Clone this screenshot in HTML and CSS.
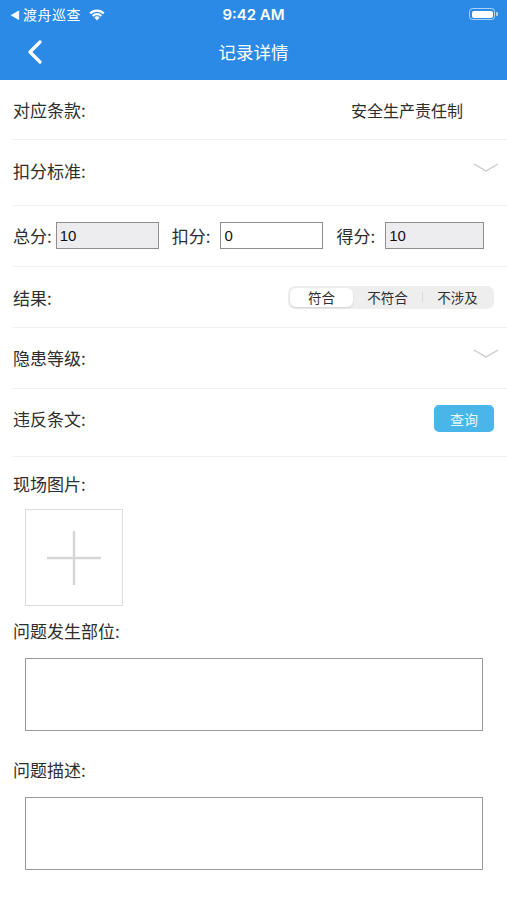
FILE: index.html
```html
<!DOCTYPE html>
<html lang="zh">
<head>
<meta charset="utf-8">
<title>记录详情</title>
<link rel="stylesheet" href="styles.css">
</head>
<body>
<div class="header">
  <div class="statusbar">
    <div class="sb-left">
      <span class="sb-back">◀</span><span class="sb-app">渡舟巡查</span>
      <svg class="wifi" width="18" height="13" viewBox="0 0 18 13"><path d="M9 12.5 L6.3 9.6 A3.9 3.9 0 0 1 11.7 9.6 Z" fill="#fff"/><path d="M3.9 7.2 A7.3 7.3 0 0 1 14.1 7.2 L12.6 8.8 A5.2 5.2 0 0 0 5.4 8.8 Z" fill="#fff"/><path d="M1.4 4.6 A10.8 10.8 0 0 1 16.6 4.6 L15.1 6.2 A8.6 8.6 0 0 0 2.9 6.2 Z" fill="#fff"/></svg>
    </div>
    <div class="sb-time">9:42 AM</div>
    <div class="sb-right">
      <span class="battery"><span class="battery-fill"></span></span><span class="battery-cap"></span>
    </div>
  </div>
  <div class="navbar">
    <svg class="back" width="16" height="24" viewBox="0 0 16 24"><path d="M13 2 L3 12 L13 22" fill="none" stroke="#fff" stroke-width="3.2" stroke-linecap="round" stroke-linejoin="round"/></svg>
    <div class="title">记录详情</div>
  </div>
</div>

<div class="row r1">
  <span class="label">对应条款:</span>
  <span class="value">安全生产责任制</span>
</div>
<div class="row r2">
  <span class="label">扣分标准:</span>
  <svg class="chev" width="26" height="10" viewBox="0 0 26 10"><path d="M1 1 L13 8 L25 1" fill="none" stroke="#c9c9c9" stroke-width="1.3"/></svg>
</div>
<div class="row r3">
  <span class="slabel first">总分:</span><span class="input ro">10</span>
  <span class="slabel gap">扣分:</span><span class="input">0</span>
  <span class="slabel gap">得分:</span><span class="input ro last">10</span>
</div>
<div class="row r4">
  <span class="label">结果:</span>
  <div class="seg">
    <span class="seg-item active">符合</span>
    <span class="seg-item">不符合</span>
    <span class="seg-div"></span>
    <span class="seg-item">不涉及</span>
  </div>
</div>
<div class="row r5">
  <span class="label">隐患等级:</span>
  <svg class="chev" width="26" height="10" viewBox="0 0 26 10"><path d="M1 1 L13 8 L25 1" fill="none" stroke="#c9c9c9" stroke-width="1.3"/></svg>
</div>
<div class="row r6">
  <span class="label">违反条文:</span>
  <span class="btn">查询</span>
</div>

<div class="section">
  <div class="label sec-label first">现场图片:</div>
  <div class="photo">
    <svg width="54" height="54" viewBox="0 0 54 54"><path d="M27 0 V54 M0 27 H54" stroke="#d6d6d6" stroke-width="2.4"/></svg>
  </div>
  <div class="label sec-label">问题发生部位:</div>
  <div class="textbox"></div>
  <div class="label sec-label second">问题描述:</div>
  <div class="textbox"></div>
</div>
</body>
</html>
```
FILE: styles.css
```css
* { box-sizing: border-box; }
html, body { margin: 0; padding: 0; }
body {
  width: 507px;
  height: 900px;
  background: #fff;
  font-family: "Noto Sans CJK SC", "Noto Sans", sans-serif;
  color: #2e2e2e;
  overflow: hidden;
}
.header {
  background: #2a8ae6;
  height: 80px;
  color: #fff;
}
.statusbar {
  height: 28px;
  display: flex;
  align-items: center;
  justify-content: space-between;
  padding: 0 9px 0 10px;
  position: relative;
}
.sb-left { display: flex; align-items: center; font-size: 14px; }
.sb-back { font-size: 10px; margin-right: 3px; }
.sb-app { letter-spacing: 0.5px; }
.wifi { margin-left: 7px; }
.sb-time {
  font-family: "Inter", "Liberation Sans", sans-serif;
  font-weight: 600;
  font-size: 15px;
  position: absolute;
  left: 0; right: 0;
  text-align: center;
  pointer-events: none;
}
.sb-right { display: flex; align-items: center; }
.battery {
  width: 26px; height: 12px;
  border: 1px solid rgba(255,255,255,0.6);
  border-radius: 3.5px;
  padding: 1.5px;
  display: flex;
}
.battery-fill { flex: 1; background: #fff; border-radius: 2px; }
.battery-cap { width: 2px; height: 4px; background: rgba(255,255,255,0.6); border-radius: 0 1px 1px 0; margin-left: 1px; }
.navbar {
  height: 52px;
  display: flex;
  align-items: center;
  position: relative;
  padding-left: 27px;
  padding-bottom: 4px;
}
.title {
  position: absolute;
  left: 0; right: 0;
  text-align: center;
  font-size: 17.5px;
  top: 11px;
}

.row {
  display: flex;
  align-items: center;
  margin-left: 13px;
  border-bottom: 1.5px solid #f0f0f0;
  height: 60px;
}
.r1 { height: 60px; }
.r2 { height: 66px; padding-bottom: 4px; }
.r3 { height: 61px; padding-bottom: 2px; }
.r4 { height: 61px; }
.r5 { height: 61px; padding-bottom: 2px; }
.r6 { height: 68px; padding-bottom: 8px; }
.label { font-size: 17px; }
.value { margin-left: auto; margin-right: 44px; font-size: 16px; }
.chev { margin-left: auto; margin-right: 8px; margin-top: -6px; }
.slabel { font-size: 17px; }
.slabel.first { margin-right: 4px; }
.slabel.gap { margin-left: 13px; margin-right: 10px; }
.input {
  width: 103px;
  height: 27px;
  border: 1px solid #8e8e8e;
  background: #fff;
  font-family: "Liberation Sans", sans-serif;
  font-size: 15px;
  padding-left: 3px;
  display: flex;
  align-items: center;
  color: #111;
}
.input.ro { background: #ededf0; }
.input.last { width: 99px; }
.seg {
  margin-left: auto;
  margin-right: 13px;
  width: 206px;
  height: 23px;
  background: #eeeeef;
  border-radius: 7px;
  display: flex;
  align-items: center;
  padding: 2px;
  font-size: 13.5px;
}
.seg-item { flex: 1; text-align: center; line-height: 19px; }
.seg-item.active {
  flex: 0 0 63px;
  background: #fff;
  border-radius: 6px;
  box-shadow: 0 1px 2px rgba(0,0,0,0.12);
}
.seg-div { width: 1px; height: 10px; background: #d8d8d8; }
.btn {
  margin-left: auto;
  margin-right: 13px;
  width: 60px;
  height: 27px;
  background: #48b6e8;
  color: #eaf6fd;
  border-radius: 5px;
  font-size: 14px;
  display: flex;
  align-items: center;
  justify-content: center;
}

.section { padding-top: 15px; }
.sec-label { margin-left: 13px; line-height: 24px; height: 24px; margin-top: 13px; }
.sec-label.first { margin-top: 0; }
.sec-label.second { margin-top: 27px; }
.photo {
  margin: 13px 0 0 25px;
  width: 98px;
  height: 97px;
  border: 1.5px solid #dcdcdc;
  display: flex;
  align-items: center;
  justify-content: center;
}
.textbox {
  margin: 15px 0 0 25px;
  width: 458px;
  height: 73px;
  border: 1.5px solid #999;
}
```
